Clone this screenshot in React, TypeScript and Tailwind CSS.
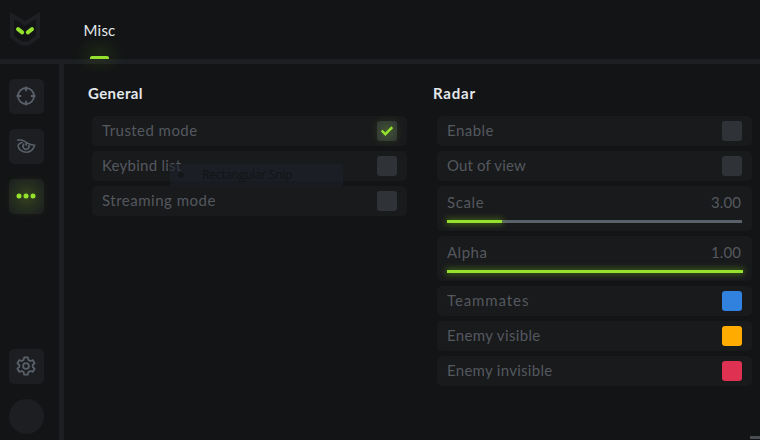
import React, { useState } from "react";
import clsx from "clsx";

const Logo = () => (
	<svg width="30" height="34" viewBox="0 0 30 34" fill="none">
		<path
			d="M2 3.5L15 11.5L28 3.5V24.5L18.5 31.5H11.5L2 24.5Z"
			stroke="#1d1f23"
			strokeWidth="4"
		/>
		<path
			d="M8 17.2L12.2 20.4M22 17.2L17.8 20.4"
			stroke="#94e22d"
			strokeWidth="4"
			strokeLinecap="round"
		/>
	</svg>
);

const AimIcon = () => (
	<svg width="20" height="20" viewBox="0 0 20 20" fill="none" stroke="currentColor" strokeWidth="1.8">
		<circle cx="10" cy="10" r="8" />
		<path d="M10 0.5V5.2M10 14.8V19.5M0.5 10H5.2M14.8 10H19.5" />
	</svg>
);

const EyeIcon = () => (
	<svg width="20" height="16" viewBox="0 0 20 16" fill="none" stroke="currentColor" strokeWidth="1.6">
		<path d="M1 2H5.5C8 2.2 9.5 4 11.5 5.2C13.5 6.6 16 7.1 18.6 7.2C18 11.2 14.5 14.2 10.5 14.2C6 14.2 2.5 11.2 2.1 7.8C2.4 6.3 4 4.8 6.8 4.2" />
		<path d="M8.3 5.8A3 3 0 1 0 12.6 6.8" />
		<path d="M10.2 4.5V7.8" />
	</svg>
);

const DotsIcon = () => (
	<svg width="20" height="6" viewBox="0 0 20 6" fill="currentColor">
		<circle cx="3" cy="3" r="2.5" />
		<circle cx="10" cy="3" r="2.5" />
		<circle cx="17" cy="3" r="2.5" />
	</svg>
);

const GearIcon = () => (
	<svg width="20" height="20" viewBox="0 0 20 20" fill="none" stroke="currentColor" strokeWidth="1.8" strokeLinejoin="round">
		<path d="M8.2 1.3H11.8L12.4 3.9L14.3 5L16.8 4.2L18.6 7.3L16.7 9V11L18.6 12.7L16.8 15.8L14.3 15L12.4 16.1L11.8 18.7H8.2L7.6 16.1L5.7 15L3.2 15.8L1.4 12.7L3.3 11V9L1.4 7.3L3.2 4.2L5.7 5L7.6 3.9Z" />
		<circle cx="10" cy="10" r="2.9" />
	</svg>
);

type NavButtonProps = {
	active?: boolean;
	onClick?: () => void;
	label: string;
	children: React.ReactNode;
};

const NavButton: React.FC<NavButtonProps> = ({ active, onClick, label, children }) => (
	<button
		aria-label={label}
		onClick={onClick}
		className={clsx(
			"flex size-[35px] items-center justify-center rounded-[5px] pr-px pb-px",
			active
				? "bg-[#1c1e21] bg-[radial-gradient(circle,#34461c_0%,#27311e_40%,#1e2220_85%)] text-[#94e22d] shadow-[0_0_12px_rgba(148,226,45,0.06)]"
				: "bg-[#1c1e22] text-[#596069]",
		)}
	>
		{children}
	</button>
);

type RowProps = { label: string; spacing: string; children: React.ReactNode };

const Row: React.FC<RowProps> = ({ label, spacing, children }) => (
	<div className="flex h-[30px] items-center justify-between rounded-[5px] bg-[#191a1c] px-2.5">
		<span className={clsx("pb-0.5", spacing)}>{label}</span>
		{children}
	</div>
);

const Checkbox = ({ defaultChecked = false, label }: { defaultChecked?: boolean; label: string }) => {
	const [checked, setChecked] = useState(defaultChecked);

	return (
		<button
			role="checkbox"
			aria-label={label}
			aria-checked={checked}
			onClick={() => setChecked(!checked)}
			className={clsx(
				"flex size-5 items-center justify-center rounded-[3px]",
				checked
					? "bg-[#303638] bg-[radial-gradient(circle,#41542f_0%,#343b36_80%)] shadow-[0_0_8px_rgba(148,226,45,0.12)]"
					: "bg-[#2f3237]",
			)}
		>
			{checked && (
				<svg width="12" height="10" viewBox="0 0 12 10" fill="none">
					<path d="M0.7 4.6L4.3 8.2L11.3 1.2" stroke="#94e22d" strokeWidth="2.4" />
				</svg>
			)}
		</button>
	);
};

type SliderProps = { label: string; spacing: string; value: string; percent: number };

const Slider: React.FC<SliderProps> = ({ label, spacing, value, percent }) => (
	<div className="h-[45px] rounded-[5px] bg-[#191a1c] px-2.5 pt-1.5">
		<div className="flex h-5 items-center justify-between">
			<span className={spacing}>{label}</span>
			<span className="mr-px tracking-[0.1px]">{value}</span>
		</div>
		<div className="mt-2 h-[3px] bg-[#59626a]">
			<div
				className="h-full bg-[#94e22d] shadow-[0_0_6px_1px_rgba(120,190,25,0.5)]"
				style={{ width: `${percent}%` }}
			/>
		</div>
	</div>
);

const App: React.FC = () => (
	<div className="relative flex h-[440px] w-[760px] flex-col overflow-hidden bg-[#131416] font-['Lato',sans-serif] text-[15px] text-[#54585f]">
		{/* Header */}
		<header className="flex h-16 shrink-0 border-b-[5px] border-[#1d1f23]">
			<div className="w-16 pt-3 pl-2.5">
				<Logo />
			</div>
			<div className="ml-5 flex w-[31px] flex-col items-center justify-between pt-5">
				<span className="text-[15px] leading-5 tracking-[0.2px] text-[#e3e8eb]">Misc</span>
				<span className="h-[3px] w-[19px] rounded-t-[2px] bg-[#94e22d] shadow-[0_-3px_18px_3px_rgba(120,190,25,0.3)]" />
			</div>
		</header>

		<div className="flex flex-1">
			{/* Sidebar */}
			<nav className="flex w-16 shrink-0 flex-col gap-[15px] border-r-[5px] border-[#1d1f23] bg-[#131416] pt-[15px] pb-1.5 pl-[9px]">
				<NavButton label="Aim"><AimIcon /></NavButton>
				<NavButton label="Visuals"><EyeIcon /></NavButton>
				<NavButton label="Misc" active><DotsIcon /></NavButton>
				<div className="mt-auto">
					<NavButton label="Settings"><GearIcon /></NavButton>
				</div>
				<div className="size-[35px] rounded-full bg-[#1c1e22]" />
			</nav>

			<main className="flex gap-[26px] pt-[19px] pl-6">
				<section className="w-[319px]">
					<h2 className="h-5 text-[15px] leading-5 font-bold tracking-[0.4px] text-[#e3e8eb]">General</h2>
					<div className="mt-[13px] ml-1 flex flex-col gap-[5px]">
						<Row label="Trusted mode" spacing="tracking-[0.45px]">
							<Checkbox label="Trusted mode" defaultChecked />
						</Row>
						<Row label="Keybind list" spacing="tracking-[0.25px]">
							<Checkbox label="Keybind list" />
						</Row>
						<Row label="Streaming mode" spacing="tracking-[0.5px]">
							<Checkbox label="Streaming mode" />
						</Row>
					</div>
				</section>

				<section className="w-[319px]">
					<h2 className="h-5 text-[15px] leading-5 font-bold tracking-[0.8px] text-[#e3e8eb]">Radar</h2>
					<div className="mt-[13px] ml-1 flex flex-col gap-[5px]">
						<Row label="Enable" spacing="tracking-[0.45px]">
							<Checkbox label="Enable" />
						</Row>
						<Row label="Out of view" spacing="tracking-[0.15px]">
							<Checkbox label="Out of view" />
						</Row>
						<Slider label="Scale" spacing="tracking-[0.6px]" value="3.00" percent={18.6} />
						<Slider label="Alpha" spacing="tracking-[0.5px]" value="1.00" percent={100.3} />
						<Row label="Teammates" spacing="tracking-[0.9px]">
							<span className="size-5 rounded-[3px] bg-[#3182de]" />
						</Row>
						<Row label="Enemy visible" spacing="tracking-[0.35px]">
							<span className="size-5 rounded-[3px] bg-[#ffab00]" />
						</Row>
						<Row label="Enemy invisible" spacing="tracking-[0.28px]">
							<span className="size-5 rounded-[3px] bg-[#df3151]" />
						</Row>
					</div>
				</section>
			</main>
		</div>

		{/* Faded menu item over the list */}
		<div className="pointer-events-none absolute top-[164px] left-[170px] flex h-[22px] w-[173px] items-center bg-[#1c222a]/60 pl-2">
			<span className="size-1.5 rounded-full bg-[#15181b]" />
			<span className="ml-[18px] font-['Open_Sans',sans-serif] text-xs tracking-[-0.25px] text-[#121416]">Rectangular Snip</span>
		</div>

		{/* Resize grip */}
		<div className="absolute right-0 bottom-px h-[3px] w-2.5 bg-[#4a4e54]" />
	</div>
);

export default App;
